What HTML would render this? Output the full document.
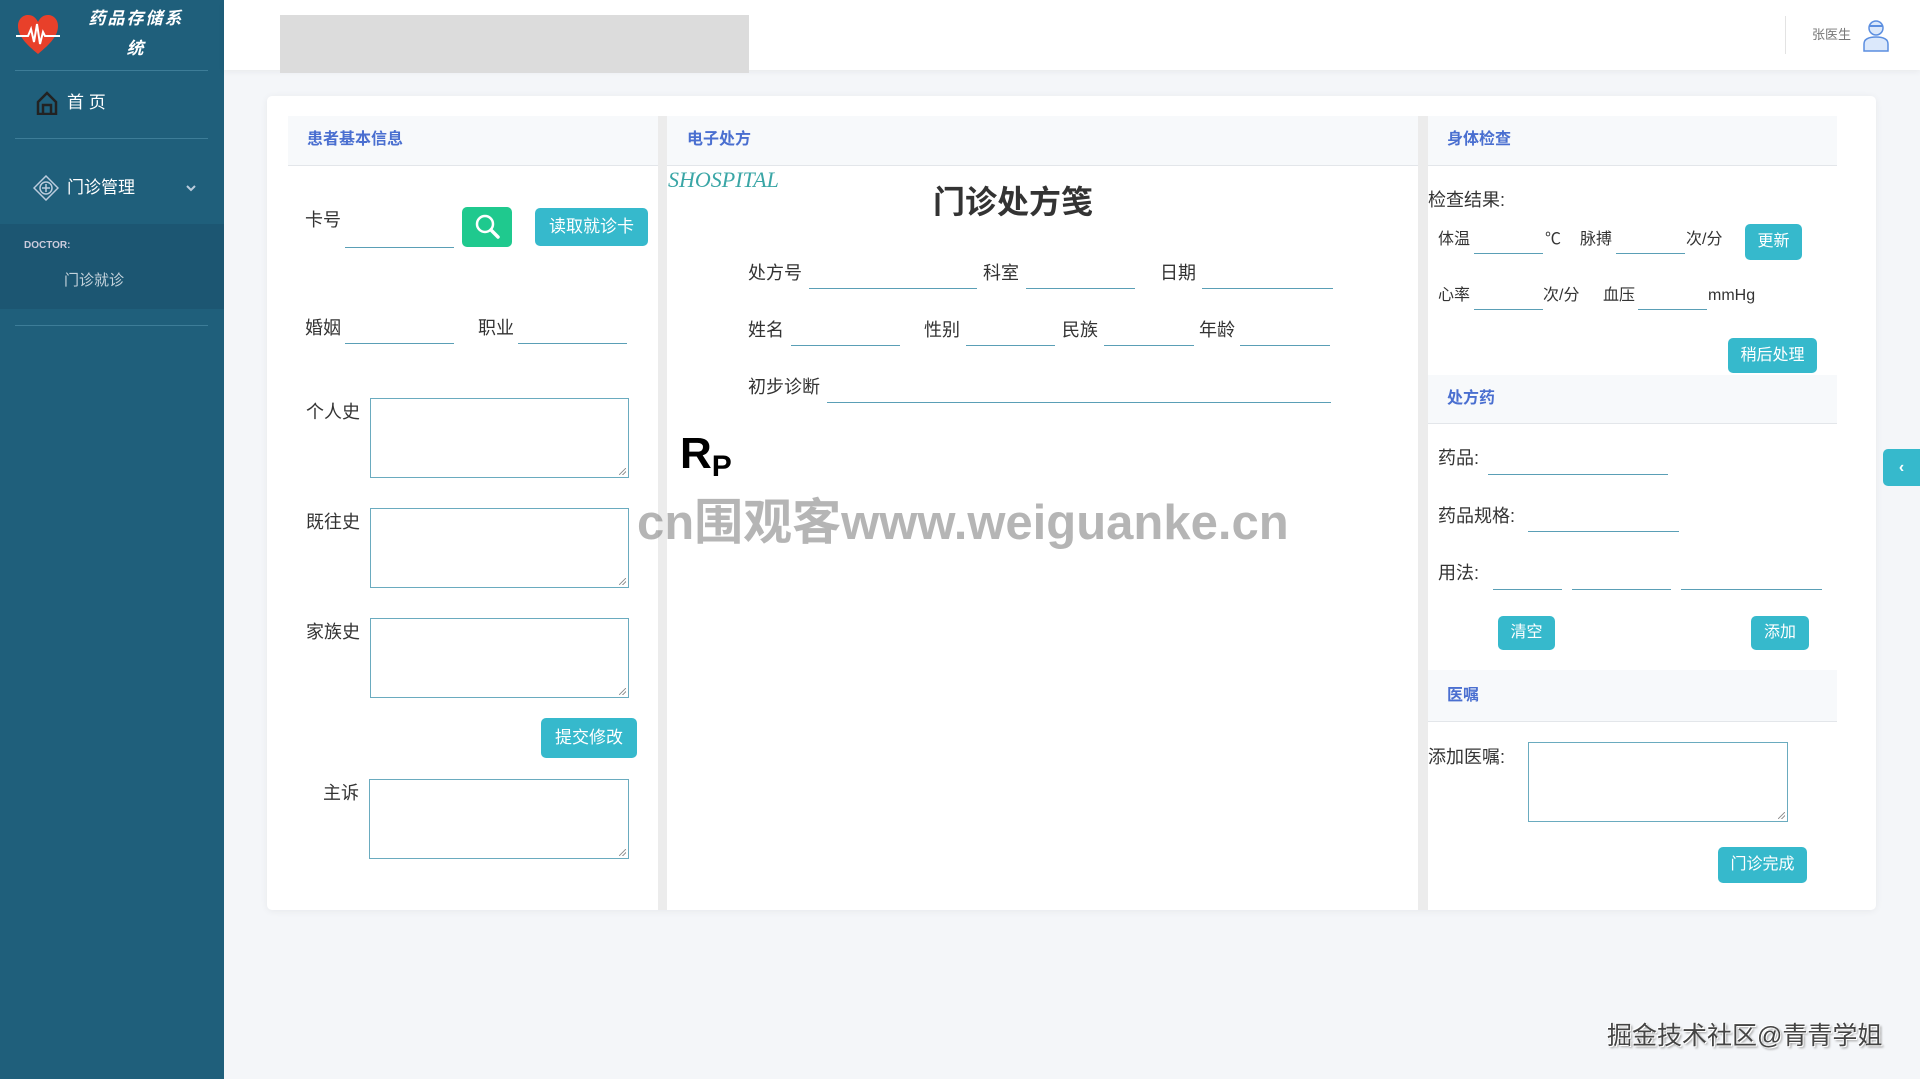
<!DOCTYPE html>
<html><head><meta charset="utf-8"><style>
*{margin:0;padding:0;box-sizing:border-box}
body{width:1920px;height:1079px;overflow:hidden;background:#f4f6f9;font-family:"Liberation Sans","Noto Sans CJK SC",sans-serif;color:#333;position:relative}
.a{position:absolute;white-space:nowrap}
.t{position:absolute;white-space:nowrap;line-height:24px;height:24px;font-size:18px;color:#333}
.ul{position:absolute;height:1px;background:#5a9fb6}
.ta{position:absolute;border:1px solid #6aabbf;background:#fff}
.ta:after{content:"";position:absolute;right:2px;bottom:2px;width:7px;height:7px;background:linear-gradient(135deg,transparent 45%,#999 45%,#999 55%,transparent 55%,transparent 70%,#999 70%,#999 80%,transparent 80%)}
.btn{position:absolute;background:#36b9cc;color:#fff;border-radius:5px;font-size:16px;text-align:center}
.hd{position:absolute;background:#f7f9fb;border-bottom:1px solid #e3e6ea}
.ht{position:absolute;color:#4a6fd0;font-size:16px;font-weight:bold;line-height:20px}
</style></head><body>
<div class="a" style="left:0;top:0;width:224px;height:1079px;background:#1f5f7b"></div>
<svg class="a" style="left:16px;top:14px" width="44" height="42" viewBox="0 0 44 42"><path d="M22 40 C10 30 2 22 2 12 C2 5 7 1 12 1 C17 1 20 4 22 8 C24 4 27 1 32 1 C37 1 42 5 42 12 C42 22 34 30 22 40Z" fill="#e8402a"/><path d="M0 22 H12 L15 15 L18 28 L21 10 L24 30 L27 18 L29 22 H44" stroke="#fff" stroke-width="2" fill="none"/></svg>
<div class="a" style="left:78px;top:4px;width:116px;text-align:center;color:#fff;font-weight:bold;font-style:italic;font-size:17px;line-height:30px;letter-spacing:2px">药品存储系<br>统</div>
<div class="a" style="left:15px;top:70px;width:193px;height:1px;background:#3d7d98"></div>
<svg class="a" style="left:36px;top:91px" width="22" height="24" viewBox="0 0 22 24"><path d="M2 11 L11 2 L20 11 V23 H2Z M7 23 V14 H15 V23" fill="none" stroke="#222" stroke-width="2.5"/></svg>
<div class="a" style="left:67px;top:92px;color:#fff;font-size:17px;line-height:22px">首 页</div>
<div class="a" style="left:15px;top:138px;width:193px;height:1px;background:#3d7d98"></div>
<svg class="a" style="left:33px;top:175px" width="26" height="26" viewBox="0 0 26 26"><path d="M13 1 L25 13 L13 25 L1 13Z" fill="none" stroke="#bcd" stroke-width="1.5"/><circle cx="13" cy="13" r="6" fill="none" stroke="#bcd" stroke-width="1.5"/><path d="M13 9 V17 M9 13 H17" stroke="#bcd" stroke-width="1.5"/></svg>
<div class="a" style="left:67px;top:177px;color:#fff;font-size:17px;line-height:22px">门诊管理</div>
<svg class="a" style="left:186px;top:184px" width="10" height="8" viewBox="0 0 10 8"><path d="M1 2 L5 6 L9 2" stroke="#bcd" stroke-width="2" fill="none"/></svg>
<div class="a" style="left:0;top:224px;width:224px;height:85px;background:#1c5672"></div>
<div class="a" style="left:24px;top:240px;color:#ccd;font-size:10px;font-weight:bold;line-height:12px">DOCTOR:</div>
<div class="a" style="left:64px;top:271px;color:#c5d3dc;font-size:15px;line-height:20px">门诊就诊</div>
<div class="a" style="left:15px;top:325px;width:193px;height:1px;background:#3d7d98"></div>
<div class="a" style="left:224px;top:0;width:1696px;height:70px;background:#fff;box-shadow:0 2px 6px rgba(0,0,0,.05)"></div>
<div class="a" style="left:280px;top:15px;width:469px;height:58px;background:#dcdcdc"></div>
<div class="a" style="left:1785px;top:16px;width:1px;height:38px;background:#e3e3e3"></div>
<div class="a" style="left:1812px;top:26px;color:#777;font-size:13px;line-height:18px">张医生</div>
<svg class="a" style="left:1862px;top:18px" width="28" height="34" viewBox="0 0 28 34"><circle cx="14" cy="10" r="7" fill="#dbe8fb" stroke="#5b8ee0" stroke-width="1.5"/><path d="M7 8 H21" stroke="#5b8ee0" stroke-width="2"/><path d="M2 33 V26 C2 21 7 19 14 19 C21 19 26 21 26 26 V33Z" fill="#dbe8fb" stroke="#5b8ee0" stroke-width="1.5"/></svg>
<div class="a" style="left:267px;top:96px;width:1609px;height:814px;background:#fff;border-radius:5px;box-shadow:0 1px 8px rgba(0,0,0,.06)"></div>
<div class="a" style="left:658px;top:116px;width:9px;height:794px;background:#ececec"></div>
<div class="a" style="left:1418px;top:116px;width:10px;height:794px;background:#ececec"></div>
<div class="hd" style="left:288px;top:116px;width:370px;height:50px"></div>
<div class="ht" style="left:307px;top:130px">患者基本信息</div>
<div class="t" style="left:305px;top:208px">卡号</div>
<div class="ul" style="left:345px;top:247px;width:109px"></div>
<div class="a" style="left:462px;top:207px;width:50px;height:40px;background:#1fc98e;border-radius:5px"></div>
<svg class="a" style="left:474px;top:213px" width="28" height="28" viewBox="0 0 28 28"><circle cx="11" cy="11" r="8" fill="none" stroke="#fff" stroke-width="2.5"/><path d="M17 17 L24 24" stroke="#fff" stroke-width="3.5" stroke-linecap="round"/></svg>
<div class="btn" style="left:535px;top:208px;width:113px;height:38px;line-height:38px;font-size:17px">读取就诊卡</div>
<div class="t" style="left:305px;top:316px">婚姻</div>
<div class="ul" style="left:345px;top:343px;width:109px"></div>
<div class="t" style="left:478px;top:316px">职业</div>
<div class="ul" style="left:518px;top:343px;width:109px"></div>
<div class="t" style="left:306px;top:400px">个人史</div>
<div class="ta" style="left:370px;top:398px;width:259px;height:80px"></div>
<div class="t" style="left:306px;top:510px">既往史</div>
<div class="ta" style="left:370px;top:508px;width:259px;height:80px"></div>
<div class="t" style="left:306px;top:620px">家族史</div>
<div class="ta" style="left:370px;top:618px;width:259px;height:80px"></div>
<div class="btn" style="left:541px;top:718px;width:96px;height:40px;line-height:40px;font-size:17px">提交修改</div>
<div class="t" style="left:323px;top:781px">主诉</div>
<div class="ta" style="left:369px;top:779px;width:260px;height:80px"></div>
<div class="hd" style="left:667px;top:116px;width:751px;height:50px"></div>
<div class="ht" style="left:687px;top:130px">电子处方</div>
<div class="a" style="left:668px;top:166px;color:#3aa6a6;font-family:'Liberation Serif',serif;font-style:italic;font-size:22px;line-height:28px">SHOSPITAL</div>
<div class="a" style="left:933px;top:182px;color:#333;font-weight:bold;font-size:32px;line-height:40px">门诊处方笺</div>
<div class="t" style="left:748px;top:261px">处方号</div><div class="ul" style="left:809px;top:288px;width:168px"></div>
<div class="t" style="left:983px;top:261px">科室</div><div class="ul" style="left:1026px;top:288px;width:109px"></div>
<div class="t" style="left:1160px;top:261px">日期</div><div class="ul" style="left:1202px;top:288px;width:131px"></div>
<div class="t" style="left:748px;top:318px">姓名</div><div class="ul" style="left:791px;top:345px;width:109px"></div>
<div class="t" style="left:924px;top:318px">性别</div><div class="ul" style="left:966px;top:345px;width:89px"></div>
<div class="t" style="left:1062px;top:318px">民族</div><div class="ul" style="left:1104px;top:345px;width:90px"></div>
<div class="t" style="left:1199px;top:318px">年龄</div><div class="ul" style="left:1240px;top:345px;width:90px"></div>
<div class="t" style="left:748px;top:375px">初步诊断</div><div class="ul" style="left:827px;top:402px;width:504px"></div>
<div class="a" style="left:680px;top:430px;color:#000;font-weight:bold;font-size:44px;line-height:48px">R<span style="font-size:30px;position:relative;top:8px">P</span></div>
<div class="a" style="left:637px;top:495px;color:rgba(120,120,120,.55);font-weight:bold;font-size:49px;line-height:56px">cn围观客www.weiguanke.cn</div>
<div class="hd" style="left:1428px;top:116px;width:409px;height:50px"></div>
<div class="ht" style="left:1447px;top:130px">身体检查</div>
<div class="t" style="left:1428px;top:188px">检查结果:</div>
<div class="t" style="left:1438px;top:228px;font-size:16px">体温</div><div class="ul" style="left:1474px;top:253px;width:69px"></div>
<div class="t" style="left:1545px;top:228px;font-size:16px">℃</div>
<div class="t" style="left:1580px;top:228px;font-size:16px">脉搏</div><div class="ul" style="left:1616px;top:253px;width:69px"></div>
<div class="t" style="left:1686px;top:228px;font-size:16px">次/分</div>
<div class="btn" style="left:1745px;top:224px;width:57px;height:36px;line-height:36px">更新</div>
<div class="t" style="left:1438px;top:284px;font-size:16px">心率</div><div class="ul" style="left:1474px;top:309px;width:69px"></div>
<div class="t" style="left:1543px;top:284px;font-size:16px">次/分</div>
<div class="t" style="left:1603px;top:284px;font-size:16px">血压</div><div class="ul" style="left:1638px;top:309px;width:69px"></div>
<div class="t" style="left:1708px;top:284px;font-size:16px">mmHg</div>
<div class="btn" style="left:1728px;top:338px;width:89px;height:35px;line-height:35px">稍后处理</div>
<div class="hd" style="left:1428px;top:375px;width:409px;height:49px"></div>
<div class="ht" style="left:1447px;top:389px">处方药</div>
<div class="t" style="left:1438px;top:446px">药品:</div><div class="ul" style="left:1488px;top:474px;width:180px"></div>
<div class="t" style="left:1438px;top:504px">药品规格:</div><div class="ul" style="left:1528px;top:531px;width:151px"></div>
<div class="t" style="left:1438px;top:561px">用法:</div>
<div class="ul" style="left:1493px;top:589px;width:69px"></div><div class="ul" style="left:1572px;top:589px;width:99px"></div><div class="ul" style="left:1681px;top:589px;width:141px"></div>
<div class="btn" style="left:1498px;top:616px;width:57px;height:34px;line-height:34px">清空</div>
<div class="btn" style="left:1751px;top:616px;width:58px;height:34px;line-height:34px">添加</div>
<div class="hd" style="left:1428px;top:670px;width:409px;height:52px"></div>
<div class="ht" style="left:1447px;top:686px">医嘱</div>
<div class="t" style="left:1428px;top:745px">添加医嘱:</div>
<div class="ta" style="left:1528px;top:742px;width:260px;height:80px"></div>
<div class="btn" style="left:1718px;top:847px;width:89px;height:36px;line-height:36px">门诊完成</div>
<div class="a" style="left:1883px;top:449px;width:37px;height:37px;background:#36b9cc;border-radius:5px 0 0 5px;color:#fff;font-weight:bold;font-size:16px;line-height:37px;text-align:center">&#8249;</div>
<div class="a" style="left:1607px;top:1020px;color:#444;font-size:25px;line-height:32px;text-shadow:1px 1px 0 #fff,-1px -1px 0 #fff,2px 2px 2px #999">掘金技术社区@青青学姐</div>
</body></html>
